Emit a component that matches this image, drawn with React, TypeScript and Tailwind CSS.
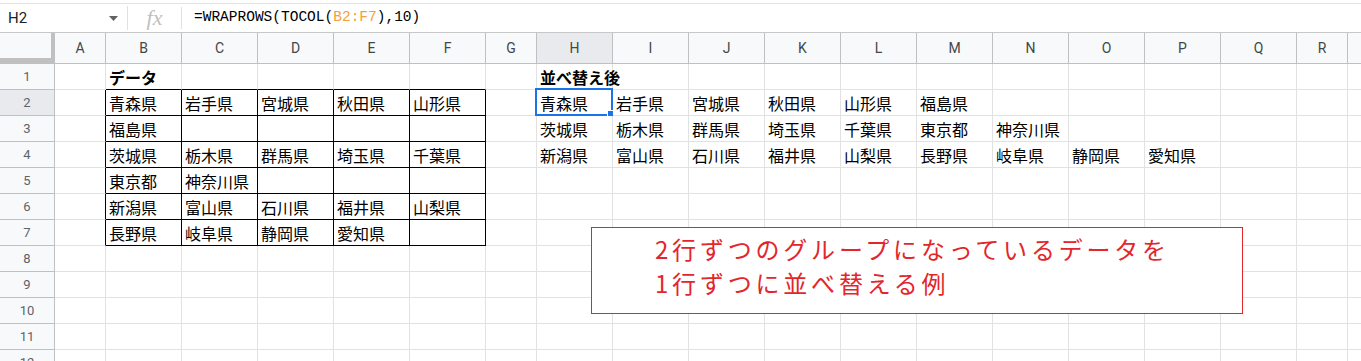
import React from 'react';

const cols = [
  { label: 'A', w: 'w-[51px]' },
  { label: 'B', w: 'w-[76px]' },
  { label: 'C', w: 'w-[76px]' },
  { label: 'D', w: 'w-[76px]' },
  { label: 'E', w: 'w-[76px]' },
  { label: 'F', w: 'w-[76px]' },
  { label: 'G', w: 'w-[51px]' },
  { label: 'H', w: 'w-[76px]' },
  { label: 'I', w: 'w-[76px]' },
  { label: 'J', w: 'w-[76px]' },
  { label: 'K', w: 'w-[76px]' },
  { label: 'L', w: 'w-[76px]' },
  { label: 'M', w: 'w-[76px]' },
  { label: 'N', w: 'w-[76px]' },
  { label: 'O', w: 'w-[76px]' },
  { label: 'P', w: 'w-[76px]' },
  { label: 'Q', w: 'w-[76px]' },
  { label: 'R', w: 'w-[51px]' },
  // partly visible column at the right edge, label scrolled out of view
  { label: '', w: 'w-[76px]' },
];

// B2:F7
const source: Record<number, string[]> = {
  2: ['青森県', '岩手県', '宮城県', '秋田県', '山形県'],
  3: ['福島県', '', '', '', ''],
  4: ['茨城県', '栃木県', '群馬県', '埼玉県', '千葉県'],
  5: ['東京都', '神奈川県', '', '', ''],
  6: ['新潟県', '富山県', '石川県', '福井県', '山梨県'],
  7: ['長野県', '岐阜県', '静岡県', '愛知県', ''],
};

// H2:Q4
const wrapped: Record<number, string[]> = {
  2: ['青森県', '岩手県', '宮城県', '秋田県', '山形県', '福島県'],
  3: ['茨城県', '栃木県', '群馬県', '埼玉県', '千葉県', '東京都', '神奈川県'],
  4: ['新潟県', '富山県', '石川県', '福井県', '山梨県', '長野県', '岐阜県', '静岡県', '愛知県'],
};

const rows = [1, 2, 3, 4, 5, 6, 7, 8, 9, 10, 11, 12];

function cellText(r: number, ci: number) {
  if (r === 1 && ci === 1) return 'データ';
  if (r === 1 && ci === 7) return '並べ替え後';
  if (ci >= 1 && ci <= 5 && source[r]) return source[r][ci - 1];
  if (ci >= 7 && wrapped[r]) return wrapped[r][ci - 7] ?? '';
  return '';
}

function Cell({ r, ci }: { r: number; ci: number }) {
  const inBox = r >= 2 && r <= 7 && ci >= 1 && ci <= 5;
  const rightBlack = inBox || (ci === 0 && r >= 2 && r <= 7);
  const bottomBlack = inBox || (r === 1 && ci >= 1 && ci <= 5);
  const selected = r === 2 && ci === 7;
  const text = cellText(r, ci);

  return (
    <div
      className={`${cols[ci].w} shrink-0 h-full relative flex items-center pl-[3px] border-r border-b ${
        rightBlack ? 'border-r-black' : 'border-r-[#e2e2e2]'
      } ${bottomBlack ? 'border-b-black' : 'border-b-[#e2e2e2]'}`}
    >
      {text && (
        <span className={`text-[16px] leading-none whitespace-nowrap text-black ${r === 1 ? 'font-bold' : ''}`}>
          {text}
        </span>
      )}
      {selected && (
        <>
          <div className="absolute left-[-2px] top-[-2px] right-[-1px] bottom-[-1px] border-2 border-[#1a73e8]" />
          <div className="absolute left-[70px] top-[20px] w-[7px] h-[7px] bg-[#1a73e8] border border-white" />
        </>
      )}
    </div>
  );
}

export default function App() {
  return (
    <div className="w-[1361px] h-[361px] overflow-hidden bg-white relative font-['Noto_Sans_CJK_JP',sans-serif]">
      {/* Formula bar */}
      <div className="h-[33px] pt-[3px] border-b border-[#c7c7c7]">
        <div className="h-[29px] border-t border-[#e3e3e3] flex items-center">
          <div className="w-[127px] flex items-center justify-between pl-[8px] pr-[9px]">
            <span className="font-['Roboto',sans-serif] text-[15px] text-[#202124]">H2</span>
            <svg width="9" height="5" viewBox="0 0 9 5">
              <polygon points="0,0 9,0 4.5,5" fill="#5f6368" />
            </svg>
          </div>
          <div className="w-px h-[24px] bg-[#e0e0e0]" />
          <div className="w-[53px] flex items-center justify-center">
            <span className="font-['Liberation_Serif',serif] italic text-[22px] leading-none text-[#c0c0c0]">fx</span>
          </div>
          <div className="w-px h-[22px] bg-[#e0e0e0]" />
          <div className="pl-[12px] font-['Liberation_Mono',monospace] text-[14.5px] text-black whitespace-nowrap">
            =WRAPROWS(TOCOL(<span className="text-[#f4a03a]">B2:F7</span>),10)
          </div>
        </div>
      </div>

      {/* Column headers */}
      <div className="h-[31px] flex border-b border-[#c0c0c0] bg-[#f8f9fa] font-['Roboto',sans-serif]">
        <div className="w-[55px] shrink-0 h-full border-r-4 border-b-[5px] border-[#c0c0c0]" />
        {cols.map((c, ci) => (
          <div
            key={ci}
            className={`${c.w} shrink-0 h-full flex items-center justify-center border-r border-[#c0c0c0] text-[14px] text-[#444746] ${
              c.label === 'H' ? 'bg-[#e8eaed]' : ''
            }`}
          >
            {c.label}
          </div>
        ))}
      </div>

      {/* Rows */}
      {rows.map((r) => (
        <div key={r} className="h-[26px] flex">
          <div
            className={`w-[55px] shrink-0 h-full flex items-center justify-center border-r border-b border-[#c0c0c0] font-['Roboto',sans-serif] text-[13px] text-[#5f6368] ${
              r === 2 ? 'bg-[#e8eaed]' : 'bg-[#f8f9fa]'
            }`}
          >
            {r}
          </div>
          {cols.map((c, ci) => (
            <Cell key={ci} r={r} ci={ci} />
          ))}
        </div>
      ))}

      {/* Annotation text box */}
      <div className="absolute left-[591px] top-[227px] w-[652px] h-[87px] border border-[#e3262b] bg-white pl-[63px] pt-[4px] text-[24px] leading-[34px] tracking-[3.8px] text-[#e3262b]">
        <div>2行ずつのグループになっているデータを</div>
        <div>1行ずつに並べ替える例</div>
      </div>
    </div>
  );
}
